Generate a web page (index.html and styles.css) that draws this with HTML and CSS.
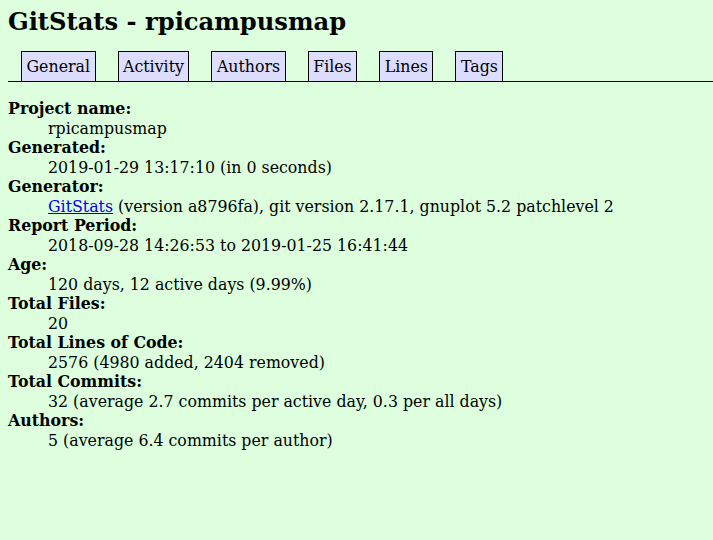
FILE: index.html
```html
<!DOCTYPE html>
<html>
<head>
<meta charset="utf-8">
<title>GitStats - rpicampusmap</title>
<link rel="stylesheet" href="styles.css">
</head>
<body>
<h1 class="title">GitStats - rpicampusmap</h1>
<div class="nav">
<ul class="nav-list">
<li class="nav-item"><a class="nav-link" href="#">General</a></li>
<li class="nav-item"><a class="nav-link" href="#">Activity</a></li>
<li class="nav-item"><a class="nav-link" href="#">Authors</a></li>
<li class="nav-item"><a class="nav-link" href="#">Files</a></li>
<li class="nav-item"><a class="nav-link" href="#">Lines</a></li>
<li class="nav-item"><a class="nav-link" href="#">Tags</a></li>
</ul>
</div>
<dl class="info">
<dt class="term">Project name:</dt><dd class="desc">rpicampusmap</dd>
<dt class="term">Generated:</dt><dd class="desc">2019-01-29 13:17:10 (in 0 seconds)</dd>
<dt class="term">Generator:</dt><dd class="desc"><a class="link" href="#">GitStats</a> (version a8796fa), git version 2.17.1, gnuplot 5.2 patchlevel 2</dd>
<dt class="term">Report Period:</dt><dd class="desc">2018-09-28 14:26:53 to 2019-01-25 16:41:44</dd>
<dt class="term">Age:</dt><dd class="desc">120 days, 12 active days (9.99%)</dd>
<dt class="term">Total Files:</dt><dd class="desc">20</dd>
<dt class="term">Total Lines of Code:</dt><dd class="desc">2576 (4980 added, 2404 removed)</dd>
<dt class="term">Total Commits:</dt><dd class="desc">32 (average 2.7 commits per active day, 0.3 per all days)</dd>
<dt class="term">Authors:</dt><dd class="desc">5 (average 6.4 commits per author)</dd>
</dl>
</body>
</html>
```
FILE: styles.css
```css
html, body {
  margin: 0;
  padding: 0;
}
body {
  background-color: #dfd;
  color: black;
  font-family: "DejaVu Serif", serif;
  font-size: 15.8px;
  padding: 8px 0 8px 8px;
}
.title {
  font-size: 24.2px;
  font-weight: bold;
  margin: 0 0 9px 0;
  line-height: 28px;
}
.nav {
  border-bottom: 1px solid black;
  padding-left: 13px;
  height: 37px;
  box-sizing: border-box;
  margin-bottom: 17px;
}
.nav-list {
  list-style: none;
  margin: 0;
  padding: 0;
  display: flex;
  gap: 22px;
  height: 100%;
  align-items: flex-end;
}
.nav-item {
  border: 1px solid black;
  border-bottom: none;
  background-color: #ddf;
  height: 30px;
  box-sizing: border-box;
  display: flex;
  align-items: center;
}
.nav-link {
  color: black;
  text-decoration: none;
  padding: 0 4.5px;
}
.info {
  margin: 0;
  line-height: 19.5px;
}
.term {
  font-weight: bold;
}
.desc {
  margin-left: 40px;
}
.link {
  color: #00e;
}
```
